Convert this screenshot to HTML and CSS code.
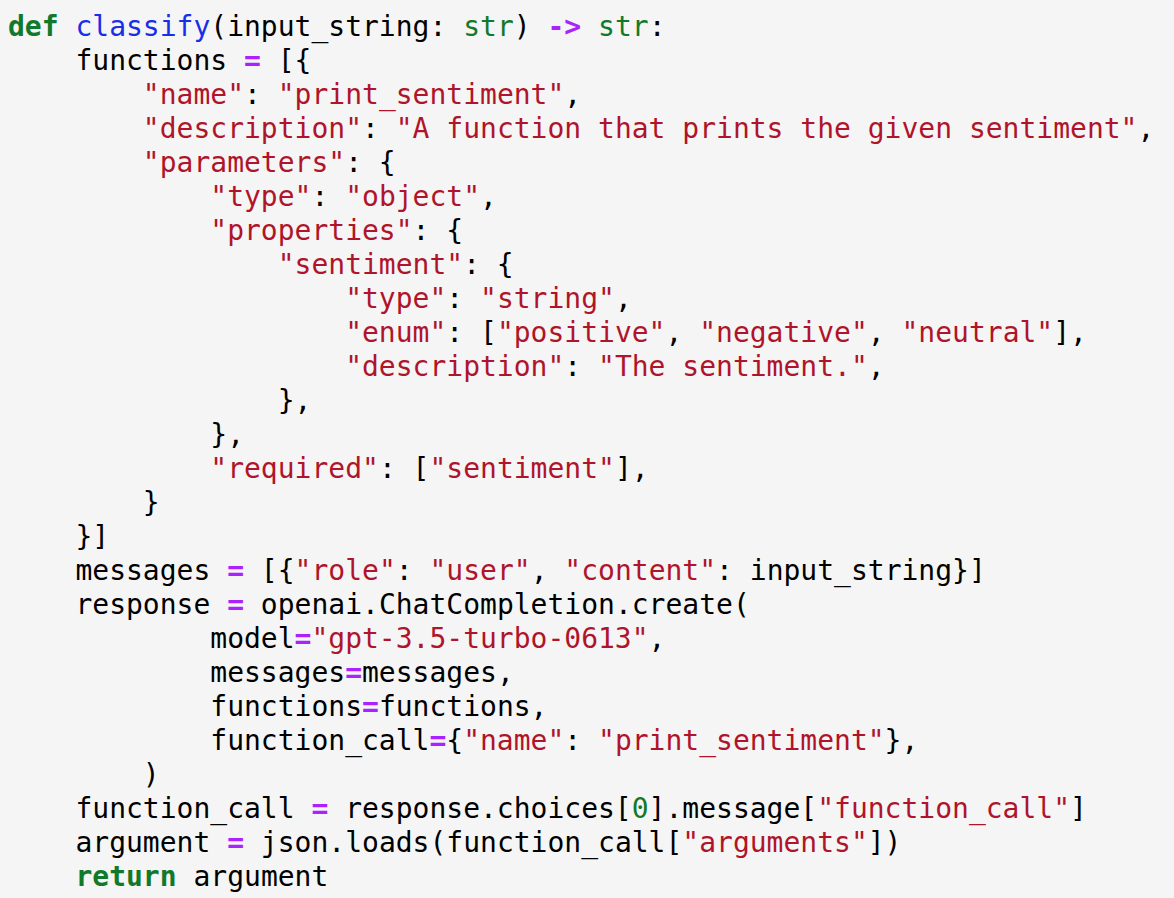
FILE: index.html
```html
<!DOCTYPE html>
<html>
<head>
<meta charset="utf-8">
<link rel="stylesheet" href="styles.css">
</head>
<body>
<pre class="code"><span class="k">def</span> <span class="nf">classify</span>(input_string: <span class="nb">str</span>) <span class="o">-&gt;</span> <span class="nb">str</span>:
    functions <span class="o">=</span> [{
        <span class="s">"name"</span>: <span class="s">"print_sentiment"</span>,
        <span class="s">"description"</span>: <span class="s">"A function that prints the given sentiment"</span>,
        <span class="s">"parameters"</span>: {
            <span class="s">"type"</span>: <span class="s">"object"</span>,
            <span class="s">"properties"</span>: {
                <span class="s">"sentiment"</span>: {
                    <span class="s">"type"</span>: <span class="s">"string"</span>,
                    <span class="s">"enum"</span>: [<span class="s">"positive"</span>, <span class="s">"negative"</span>, <span class="s">"neutral"</span>],
                    <span class="s">"description"</span>: <span class="s">"The sentiment."</span>,
                },
            },
            <span class="s">"required"</span>: [<span class="s">"sentiment"</span>],
        }
    }]
    messages <span class="o">=</span> [{<span class="s">"role"</span>: <span class="s">"user"</span>, <span class="s">"content"</span>: input_string}]
    response <span class="o">=</span> openai.ChatCompletion.create(
            model<span class="o">=</span><span class="s">"gpt-3.5-turbo-0613"</span>,
            messages<span class="o">=</span>messages,
            functions<span class="o">=</span>functions,
            function_call<span class="o">=</span>{<span class="s">"name"</span>: <span class="s">"print_sentiment"</span>},
        )
    function_call <span class="o">=</span> response.choices[<span class="m">0</span>].message[<span class="s">"function_call"</span>]
    argument <span class="o">=</span> json.loads(function_call[<span class="s">"arguments"</span>])
    <span class="k">return</span> argument</pre>
</body>
</html>
```
FILE: styles.css
```css
html, body {
  margin: 0;
  padding: 0;
  background: #f5f5f5;
}
.code {
  margin: 0;
  padding: 10px 8px 0;
  font-family: "DejaVu Sans Mono", "Liberation Mono", monospace;
  font-size: 28px;
  line-height: 34px;
  color: #000;
  white-space: pre;
}
.k { color: #117a2a; font-weight: bold; }
.nf { color: #1a2ee8; }
.nb { color: #117a2a; }
.s { color: #b0142a; }
.o { color: #aa22ff; font-weight: bold; }
.m { color: #117a2a; }
```
